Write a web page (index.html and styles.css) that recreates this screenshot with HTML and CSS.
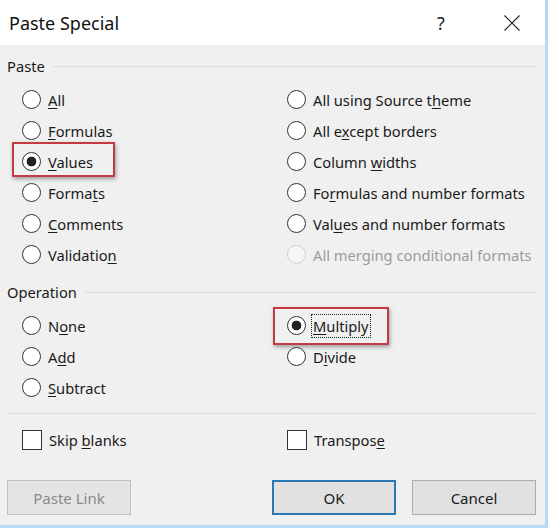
FILE: index.html
```html
<!DOCTYPE html>
<html lang="en">
<head>
    <meta charset="UTF-8">
    <meta name="viewport" content="width=device-width, initial-scale=1.0">
    <link rel="stylesheet" href="styles.css">
    <title>Paste Special</title>
</head>
<body>
    <div class="dialog">
        <div class="titlebar">
            <h1>Paste Special</h1>
            <span class="help">?</span>
            <span class="close">
                <svg width="16" height="16" viewBox="0 0 16 16"><path d="M0.5 0.5 L15.5 15.5 M15.5 0.5 L0.5 15.5" stroke="#222" stroke-width="1.1" fill="none"/></svg>
            </span>
        </div>

        <div class="content">
            <div class="group-head"><span>Paste</span><i></i></div>
            <div class="options paste">
                <label class="opt"><input type="radio" name="paste"><span><u>A</u>ll</span></label>
                <label class="opt"><input type="radio" name="paste"><span><u>F</u>ormulas</span></label>
                <label class="opt mark mark-values"><input type="radio" name="paste" checked><span><u>V</u>alues</span></label>
                <label class="opt"><input type="radio" name="paste"><span>Forma<u>t</u>s</span></label>
                <label class="opt"><input type="radio" name="paste"><span><u>C</u>omments</span></label>
                <label class="opt"><input type="radio" name="paste"><span>Validatio<u>n</u></span></label>
                <label class="opt"><input type="radio" name="paste"><span>All using Source t<u>h</u>eme</span></label>
                <label class="opt"><input type="radio" name="paste"><span>All e<u>x</u>cept borders</span></label>
                <label class="opt"><input type="radio" name="paste"><span>Column <u>w</u>idths</span></label>
                <label class="opt"><input type="radio" name="paste"><span>Fo<u>r</u>mulas and number formats</span></label>
                <label class="opt"><input type="radio" name="paste"><span>Val<u>u</u>es and number formats</span></label>
                <label class="opt disabled"><input type="radio" name="paste" disabled><span>All merging conditional formats</span></label>
            </div>

            <div class="group-head op-head"><span>Operation</span><i></i></div>
            <div class="options operation">
                <label class="opt"><input type="radio" name="op"><span>N<u>o</u>ne</span></label>
                <label class="opt"><input type="radio" name="op"><span>A<u>d</u>d</span></label>
                <label class="opt"><input type="radio" name="op"><span><u>S</u>ubtract</span></label>
                <label class="opt mark mark-multiply"><input type="radio" name="op" checked><span class="focused"><u>M</u>ultiply</span></label>
                <label class="opt"><input type="radio" name="op"><span>D<u>i</u>vide</span></label>
            </div>

            <div class="separator"></div>

            <div class="options checks">
                <label class="opt"><input type="checkbox"><span>Skip <u>b</u>lanks</span></label>
                <label class="opt"><input type="checkbox"><span>Transpos<u>e</u></span></label>
            </div>

            <div class="buttons">
                <button disabled>Paste Link</button>
                <button class="default">OK</button>
                <button>Cancel</button>
            </div>
        </div>
    </div>
</body>
</html>
```

FILE: styles.css
```css
* {
    margin: 0;
    padding: 0;
    box-sizing: border-box;
}
body {
    width: 548px;
    height: 528px;
    overflow: hidden;
    background: #fff;
    font-family: "Noto Sans", "Liberation Sans", sans-serif;
    font-size: 14.7px;
    color: #1a1a1a;
}
.dialog {
    width: 548px;
    height: 528px;
    background: #f0f0f0;
    border-right: 3px solid #b7daf2;
    border-bottom: 3px solid #b7daf2;
    display: flex;
    flex-direction: column;
}

/* title bar */
.titlebar {
    height: 45px;
    background: #fff;
    display: flex;
    align-items: center;
    padding-left: 9px;
    padding-right: 18px;
    gap: 41px;
}
.titlebar h1 {
    flex: 1;
    font-size: 18px;
    font-weight: normal;
    color: #111;
}
.help {
    width: 30px;
    text-align: center;
    font-size: 18px;
    color: #222;
}
.close {
    width: 30px;
    height: 16px;
    display: flex;
    justify-content: center;
}

.content {
    padding: 0 9px 0 7px;
}

/* group caption with the rule after it */
.group-head {
    margin-top: 11px;
    height: 20px;
    display: flex;
    align-items: center;
}
.op-head { margin-top: 12px; }
.group-head i {
    flex: 1;
    height: 1px;
    background: #dcdcdc;
    margin-left: 8px;
}

.options {
    display: grid;
    grid-template-columns: 265px 1fr;
    grid-auto-flow: column;
    grid-auto-rows: 31px;
    margin-top: 8px;
    padding-left: 15px;
}
.paste { grid-template-rows: repeat(6, 31px); }
.operation { grid-template-rows: repeat(3, 31px); }
.checks {
    grid-template-rows: 31px;
    margin-top: 10px;
}

.opt {
    position: relative;
    display: flex;
    align-items: center;
    gap: 7px;
    white-space: nowrap;
}
.opt u {
    text-decoration-thickness: 1px;
    text-underline-offset: 2px;
}
.opt input {
    appearance: none;
    width: 19px;
    height: 19px;
    border: 1px solid #333;
    border-radius: 50%;
    background: #fff;
    flex: none;
}
.opt input:checked {
    background: radial-gradient(circle, #222 0, #222 4.5px, #fff 5.2px);
}
.opt input[type="checkbox"] {
    width: 20px;
    height: 20px;
    border-radius: 0;
}
.disabled { color: #9b9b9b; }
.disabled input {
    border-color: #cfcfcf;
    background: #f6f6f6;
}

/* dotted focus frame */
.focused {
    outline: 1px dotted #222;
    outline-offset: 0;
    padding: 0 1px;
    margin-left: -1px;
    line-height: 22px;
}

/* red highlight frames */
.mark::after {
    content: "";
    position: absolute;
    box-sizing: border-box;
    border: 2px solid #c53a3e;
    box-shadow: 1px 2px 4px rgba(0, 0, 0, 0.35);
}
.mark-values::after {
    left: -10px;
    top: -4px;
    width: 103px;
    height: 35px;
}
.mark-multiply::after {
    left: -14px;
    top: -3px;
    width: 116px;
    height: 38px;
}

.separator {
    height: 1px;
    background: #dcdcdc;
    margin-top: 10px;
}

.buttons {
    display: flex;
    gap: 16px;
    margin-top: 25px;
}
.buttons button {
    width: 124px;
    height: 35px;
    font-family: inherit;
    font-size: 15px;
    color: #1a1a1a;
    background: #e1e1e1;
    border: 1px solid #adadad;
}
.buttons button:disabled {
    color: #8a8a8a;
    background: #e4e4e4;
    border-color: #c2c2c2;
}
.buttons .default {
    margin-left: auto;
    border: 2px solid #2a78b4;
}
```
